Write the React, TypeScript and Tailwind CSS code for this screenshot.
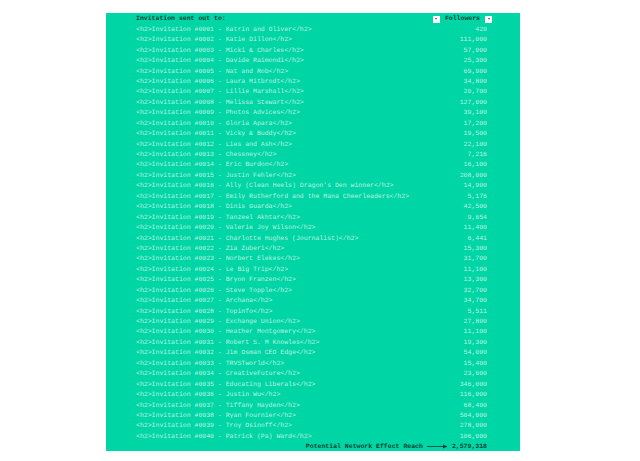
const invitations: [string, string][] = [
  ["Katrin and Oliver", "420"],
  ["Katie Dillon", "111,000"],
  ["Micki & Charles", "57,000"],
  ["Davide Raimondi", "25,300"],
  ["Nat and Rob", "69,900"],
  ["Laura Mitbrodt", "34,800"],
  ["Lillie Marshall", "20,700"],
  ["Melissa Stewart", "127,000"],
  ["Photos Advices", "39,100"],
  ["Gloria Apara", "17,200"],
  ["Vicky & Buddy", "19,500"],
  ["Lies and Ash", "22,100"],
  ["Chessney", "7,216"],
  ["Eric Burdon", "16,100"],
  ["Justin Fehler", "208,000"],
  ["Ally (Clean Heels) Dragon's Den winner", "14,900"],
  ["Emily Rutherford and the Mana Cheerleaders", "5,176"],
  ["Dinis Guarda", "42,500"],
  ["Tanzeel Akhtar", "9,654"],
  ["Valerie Joy Wilson", "11,400"],
  ["Charlotte Hughes (Journalist)", "6,441"],
  ["Zia Zuberi", "15,300"],
  ["Norbert Elekes", "31,700"],
  ["Le Big Trip", "11,100"],
  ["Bryon Franzen", "13,300"],
  ["Steve Topple", "32,700"],
  ["Archana", "34,700"],
  ["Topinfo", "5,511"],
  ["Exchange Union", "27,800"],
  ["Heather Montgomery", "11,100"],
  ["Robert S. M Knowles", "19,300"],
  ["Jim Osman CEO Edge", "54,000"],
  ["TRVSTworld", "15,400"],
  ["CreativeFuture", "23,600"],
  ["Educating Liberals", "346,000"],
  ["Justin Wu", "116,000"],
  ["Tiffany Hayden", "68,400"],
  ["Ryan Fournier", "504,000"],
  ["Troy Osinoff", "278,000"],
  ["Patrick (Pa) Ward", "106,000"],
];

function SortButton() {
  return (
    <span className="flex items-center justify-center w-[7px] h-[7px] bg-white">
      <span className="w-0 h-0 border-x-[1.5px] border-x-transparent border-t-[2px] border-t-[#555]" />
    </span>
  );
}

export default function App() {
  return (
    <div className="min-h-[461px] bg-white pt-[13px] pl-[106px] font-['Liberation_Mono',monospace] text-[6.5px] [text-rendering:geometricPrecision]">
      <div className="w-[414px] h-[438px] bg-[#00d6a5] pt-[1px] pl-[30px] pr-[33px] text-[#bdf3e2]">
        <div className="flex items-center justify-between h-[10.45px] font-bold text-[#063f33]">
          <span>Invitation sent out to:</span>
          <div className="flex items-center gap-[5px] -mr-[5px]">
            <SortButton />
            <span>Followers</span>
            <SortButton />
          </div>
        </div>
        {invitations.map(([name, followers], i) => (
          <div key={i} className="flex items-center justify-between h-[10.45px] whitespace-pre">
            <span>{`<h2>Invitation #${String(i + 1).padStart(4, "0")} - ${name}</h2>`}</span>
            <span>{followers}</span>
          </div>
        ))}
        <div className="flex items-center justify-end h-[9px] font-bold text-[#063f33]">
          <span>Potential Network Effect Reach</span>
          <svg width="21" height="5" viewBox="0 0 21 5" className="ml-[4px] mr-[4px]">
            <path d="M0 2.5H17" stroke="#063f33" strokeWidth="0.8" />
            <path d="M16 0.5L20.5 2.5L16 4.5Z" fill="#063f33" />
          </svg>
          <span>2,579,318</span>
        </div>
      </div>
    </div>
  );
}
